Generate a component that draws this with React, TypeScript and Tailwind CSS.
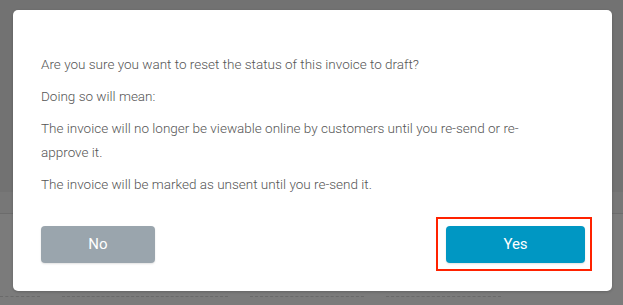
export default function App() {
  const dashes = [
    "w-[40px]",
    "w-[166px]",
    "w-[114px]",
    "w-[115px]",
  ];

  return (
    <div className="relative h-[305px] w-[623px] overflow-hidden bg-[#7b7b7b] font-['Roboto',sans-serif]">
      {/* dimmed page behind the dialog */}
      <div className="flex h-full flex-col">
        <div className="h-[192px] bg-[#727272]" />
        <div className="h-[22px] border-b border-[#6c6c6c] bg-[#777777]" />
        <div className="flex-1" />
        <div className="flex gap-[22px] pb-[8px]">
          {dashes.map((w, i) => (
            <div key={i} className={`${w} border-b border-dashed border-[#6a6a6a]`} />
          ))}
        </div>
      </div>

      {/* dialog */}
      <div className="absolute left-[13px] top-[10px] w-[599px] rounded-[5px] bg-white pb-[28px] pl-[28px] pr-[27px] pt-[42px] shadow-[0_1px_3px_rgba(0,0,0,0.2)]">
        <div className="flex max-w-[510px] flex-col gap-2 text-[13.5px] font-light leading-6 text-[#555555]">
          <p>Are you sure you want to reset the status of this invoice to draft?</p>
          <p>Doing so will mean:</p>
          <p>
            The invoice will no longer be viewable online by customers until you re-send or re-approve it.
          </p>
          <p>The invoice will be marked as unsent until you re-send it.</p>
        </div>

        <div className="mt-[30px] flex items-center justify-between">
          <button className="h-[37px] w-[114px] rounded-[4px] bg-[#9aa5ad] text-[15px] text-white shadow-[0_1px_2px_rgba(0,0,0,0.12)]">
            No
          </button>
          <div className="relative">
            <button className="block h-[37px] w-[139px] rounded-[4px] bg-[#0097c3] text-[15px] text-white shadow-[0_1px_2px_rgba(0,0,0,0.12)]">
              Yes
            </button>
            {/* highlight outline */}
            <span className="pointer-events-none absolute -bottom-[8px] -left-[10px] -right-[7px] -top-[9px] border-2 border-[#ff2200]" />
          </div>
        </div>
      </div>
    </div>
  );
}
